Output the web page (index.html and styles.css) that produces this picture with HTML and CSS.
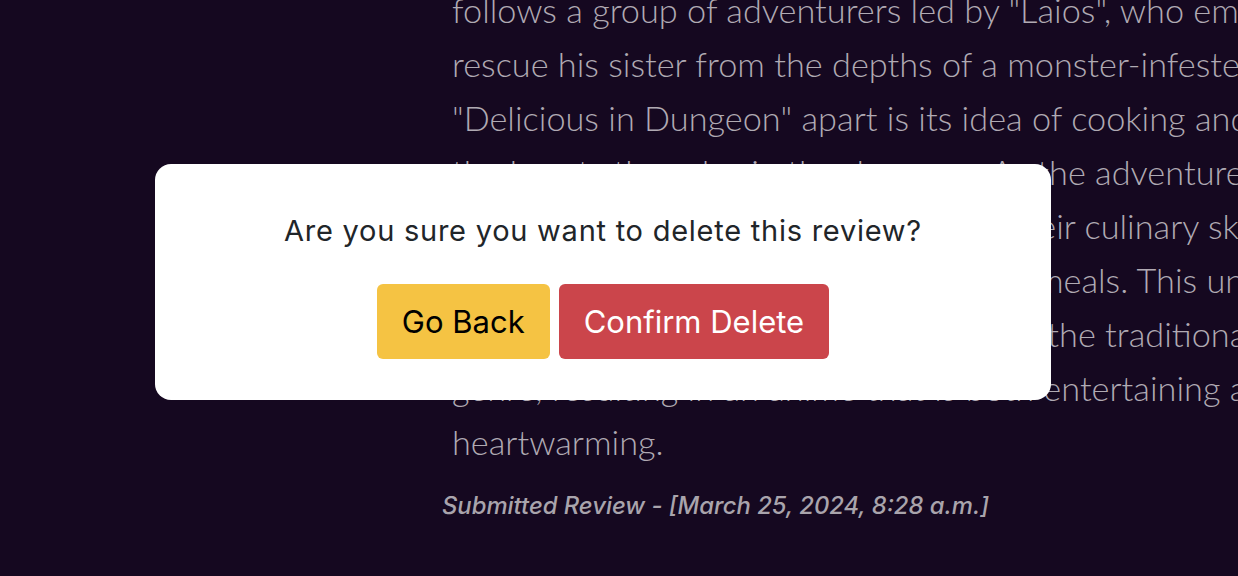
FILE: index.html
```html
<!DOCTYPE html>
<html lang="en">
<head>
<meta charset="utf-8">
<title>Review</title>
<link rel="stylesheet" href="styles.css">
</head>
<body>
<main class="page">
  <article class="review">
    <p class="review-text"><span class="ln">follows a group of adventurers led by "Laios", who embarks on a quest to</span><span class="ln">rescue his sister from the depths of a monster-infested dungeon. What sets</span><span class="ln">"Delicious in Dungeon" apart is its idea of cooking and eating</span><span class="ln">the beasts they slay in the dungeon. As the adventurers</span><span class="ln">go deeper into the dungeon they use their culinary skills</span><span class="ln">to turn all the creatures they catch into meals. This unique</span><span class="ln">twist sets the series apart from much of the traditional fantasy</span><span class="ln">genre, resulting in an anime that is both entertaining and</span><span class="ln">heartwarming.</span></p>
    <p class="submitted">Submitted Review - [March 25, 2024, 8:28 a.m.]</p>
  </article>
</main>
<div class="modal" role="dialog">
  <p class="modal-title">Are you sure you want to delete this review?</p>
  <div class="modal-actions">
    <button class="btn btn-back">Go Back</button>
    <button class="btn btn-delete">Confirm Delete</button>
  </div>
</div>
</body>
</html>
```
FILE: styles.css
```css
html, body {
  margin: 0;
  padding: 0;
  height: 100%;
  overflow: hidden;
  background: #150820;
}
.page {
  padding-left: 452px;
  margin-top: -17px;
}
.review-text {
  margin: 0;
  font-family: "Lato Light", "Lato", sans-serif;
  font-weight: 300;
  font-size: 34.3px;
  line-height: 54px;
  color: #b0aab3;
}
.ln {
  display: block;
  white-space: nowrap;
}
.submitted {
  margin: 22px 0 0 -10px;
  font-family: "Inter", "Liberation Sans", sans-serif;
  font-style: italic;
  font-weight: 500;
  font-size: 23.8px;
  color: #a9a4ac;
}
.modal {
  position: fixed;
  left: 155px;
  top: 164px;
  width: 896px;
  height: 236px;
  box-sizing: border-box;
  background: #ffffff;
  border-radius: 16px;
  display: flex;
  flex-direction: column;
  align-items: center;
  padding-top: 49px;
}
.modal-title {
  margin: 0;
  font-family: "Inter", "Liberation Sans", sans-serif;
  font-size: 29px;
  letter-spacing: 0.75px;
  color: #212529;
}
.modal-actions {
  display: flex;
  gap: 9px;
  margin-top: 36px;
}
.btn {
  height: 75px;
  border: 0;
  border-radius: 6px;
  padding: 0 25px;
  font-family: "Inter", "Liberation Sans", sans-serif;
  font-size: 31px;
  cursor: pointer;
}
.btn-back {
  background: #f5c343;
  color: #000;
}
.btn-delete {
  background: #cb454b;
  color: #fff;
}
```
